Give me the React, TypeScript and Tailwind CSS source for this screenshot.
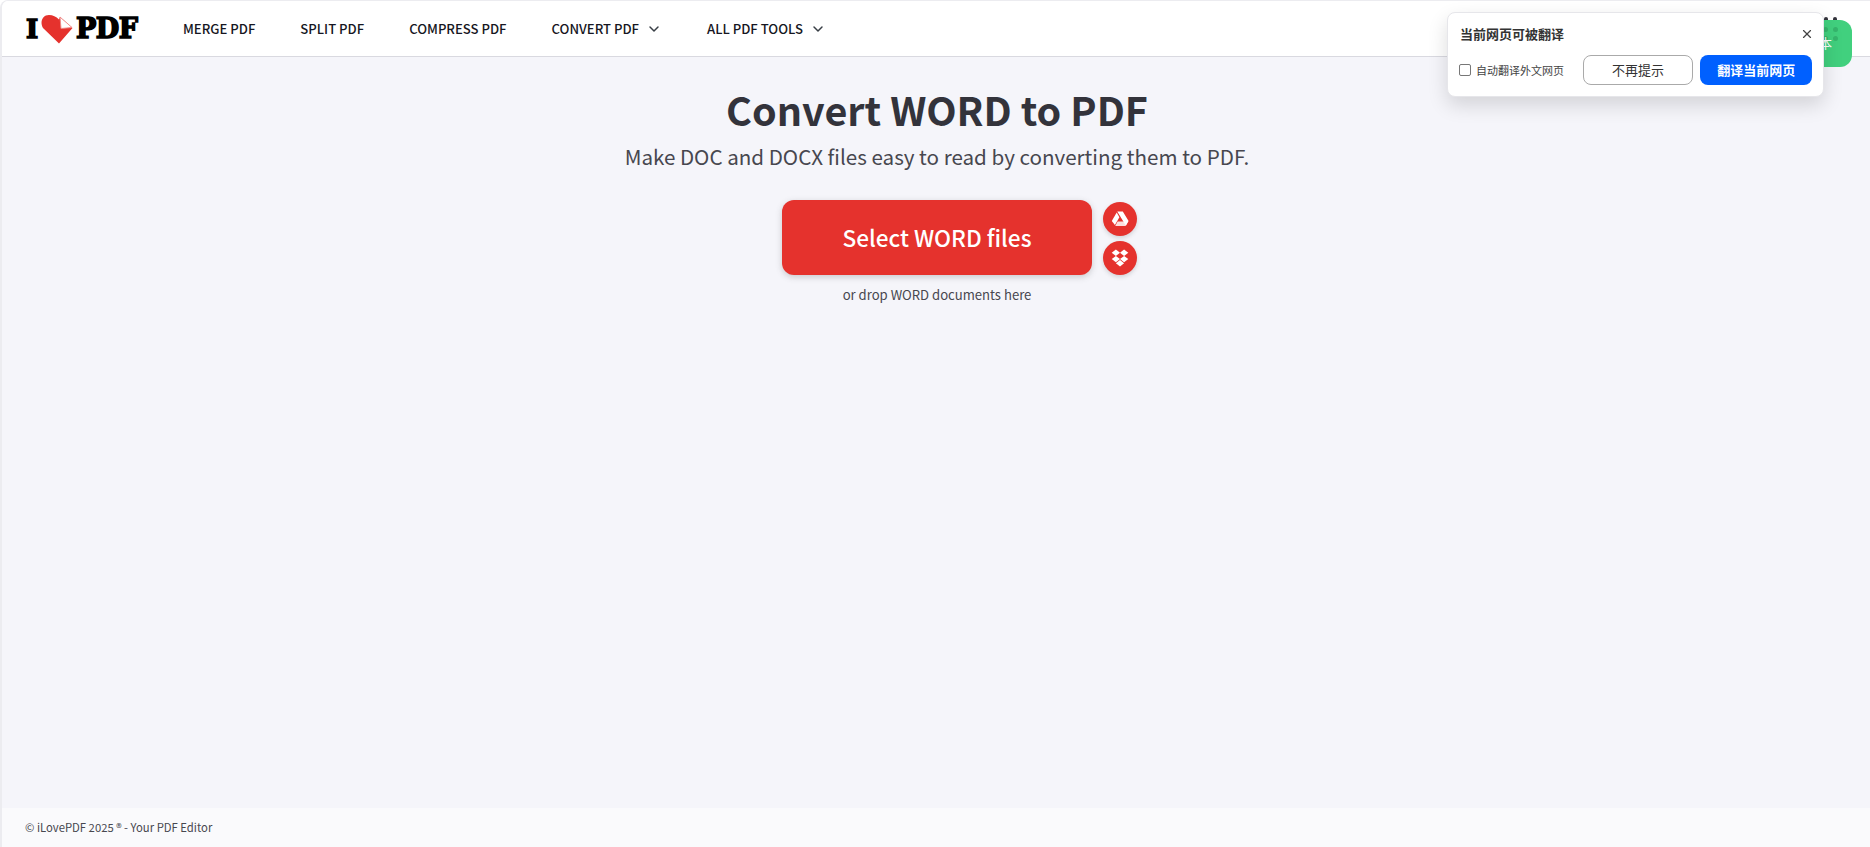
import React from 'react';
import { ChevronDown, X } from 'lucide-react';

const latin = "font-['Noto_Sans_CJK_SC','Noto_Sans',sans-serif]";

const NavItem = ({ label, caret = false }: { label: string; caret?: boolean }) => (
  <a className="flex items-center gap-[7px] text-[13.1px] font-medium leading-none text-[#161622] whitespace-nowrap">
    {label}
    {caret && <ChevronDown size={16} strokeWidth={2.2} className="text-[#383e45]" />}
  </a>
);

const Logo = () => (
  <div className="flex items-center w-[113px] h-[30px] font-['DejaVu_Serif',serif] font-bold leading-none text-black [-webkit-text-stroke:1.6px_#000]">
    <span className="w-[15px] pl-[1px] text-[26px] leading-none">I</span>
    <svg width="33" height="30" viewBox="0 0 33 30" className="mt-[1px] shrink-0">
      <path d="M19 29.5 L3 14 C-0.5 8 2.5 1 9 1 C13 1 16 2.5 19 5.5 L20 3 L32.5 14 Z" fill="#e5322d" />
      <path d="M20 3 L32 13.5 L21 14.5 Z" fill="#fff" stroke="#ee8784" strokeWidth="0.9" />
    </svg>
    <span className="ml-[3px] text-[27px] leading-none tracking-[-0.5px]">PDF</span>
  </div>
);

const ActionCircle = ({ children }: { children: React.ReactNode }) => (
  <button className="flex items-center justify-center w-[34px] h-[34px] rounded-full bg-[#e5322d] shadow-[0_2px_4px_rgba(72,72,72,0.2)]">
    {children}
  </button>
);

export default function App() {
  return (
    <div className={`relative flex flex-col h-[847px] overflow-hidden bg-white ${latin}`}>
      <div className="flex flex-col flex-1 border-l-2 border-t border-[#ececf0] rounded-tl-[8px] overflow-hidden">
        <header className="flex items-center h-[56px] shrink-0 pl-[23px] bg-white border-b border-[#d9d9e0]">
          <Logo />
          <nav className="flex items-center gap-[45px] ml-[45px]">
            <NavItem label="MERGE PDF" />
            <NavItem label="SPLIT PDF" />
            <NavItem label="COMPRESS PDF" />
            <NavItem label="CONVERT PDF" caret />
            <NavItem label="ALL PDF TOOLS" caret />
          </nav>
        </header>

        <main className="flex flex-col items-center flex-1 bg-[#f5f5fa] pt-[26px] pl-[2px]">
          <h1 className="text-[39.5px] leading-[52px] font-semibold text-[#33333b]">Convert WORD to PDF</h1>
          <p className="mt-[5px] text-[20.6px] leading-[32px] text-[#47474f]">
            Make DOC and DOCX files easy to read by converting them to PDF.
          </p>
          <div className="relative mt-[28px]">
            <button className="flex items-center justify-center w-[310px] h-[75px] rounded-[12px] bg-[#e5322d] text-white text-[22.6px] font-medium shadow-[0_2px_6px_rgba(72,72,72,0.25)]">
              Select WORD files
            </button>
            <div className="absolute left-[321px] top-[2px] flex flex-col gap-[5px]">
              <ActionCircle>
                <svg width="18" height="16" viewBox="0 0 18 16" fill="#fff">
                  <path d="M6.2 0.5 H11.8 L17.6 10 L14.9 14.8 L9 5 Z" />
                  <path d="M5.7 1.5 L8.4 6.2 L3.9 14 L0.8 10 Z" />
                  <path d="M6.6 10.6 H17 L14.4 15 H4.2 Z" opacity="0.85" />
                </svg>
              </ActionCircle>
              <ActionCircle>
                <svg width="18" height="18" viewBox="0 0 18 18" fill="#fff">
                  <path d="M4.9 0.5 L9 3.7 L4.9 6.9 L0.7 3.7 Z" />
                  <path d="M13.1 0.5 L17.3 3.7 L13.1 6.9 L9 3.7 Z" />
                  <path d="M4.9 6.9 L9 10.1 L4.9 13.3 L0.7 10.1 Z" />
                  <path d="M13.1 6.9 L17.3 10.1 L13.1 13.3 L9 10.1 Z" />
                  <path d="M4.9 14.2 L9 11 L13.1 14.2 L9 17.4 Z" />
                </svg>
              </ActionCircle>
            </div>
          </div>
          <p className="mt-[8px] text-[13.1px] leading-[24px] text-[#47474f]">or drop WORD documents here</p>
        </main>

        <footer className="flex items-center h-[39px] shrink-0 pl-[23px] bg-[#fafafc] text-[11.3px] text-[#47474f]">
          © iLovePDF 2025 ® - Your PDF Editor
        </footer>
      </div>

      {/* green widget behind the translate prompt */}
      <div className="absolute left-[1760px] top-[20px] w-[92px] h-[47px] rounded-[12px] bg-[#41d07e]">
        <div className="absolute left-[63px] top-[7px] grid grid-cols-2 gap-x-[5px] gap-y-[4px]">
          <span className="w-[5px] h-[5px] rounded-full bg-[#35b56c]" />
          <span className="w-[5px] h-[5px] rounded-full bg-[#35b56c]" />
          <span className="w-[5px] h-[5px] rounded-full bg-[#35b56c]" />
          <span className="w-[5px] h-[5px] rounded-full bg-[#35b56c]" />
        </div>
        <span className="absolute left-[59px] top-[14px] text-[13px] leading-[18px] text-white">本</span>
      </div>
      <div className="absolute left-[1824px] top-[17px] flex gap-[5px]">
        <span className="w-[4px] h-[3px] rounded-t-full bg-[#33333b]" />
        <span className="w-[4px] h-[3px] rounded-t-full bg-[#33333b]" />
      </div>

      {/* translate prompt */}
      <div className="absolute left-[1447px] top-[12px] w-[377px] h-[85px] rounded-[8px] bg-white border border-[#e6e6ea] shadow-[0_8px_20px_rgba(0,0,0,0.14)] pl-[12px] pr-[11px] pt-[12px] font-['Noto_Sans_CJK_SC',sans-serif]">
        <div className="flex items-center justify-between h-[18px]">
          <span className="text-[13px] font-bold text-[#333]">当前网页可被翻译</span>
          <X size={14} strokeWidth={2} className="mr-[-2px] text-[#444]" />
        </div>
        <div className="flex items-center mt-[12px]">
          <input type="checkbox" readOnly className="w-[12px] h-[12px] -ml-[1px] m-0 appearance-none rounded-[2px] border border-[#777] bg-white" />
          <span className="ml-[5px] text-[11px] text-[#444] w-[107px] whitespace-nowrap">自动翻译外文网页</span>
          <button className="w-[111px] h-[30px] rounded-[8px] border border-[#aaa] bg-white text-[13px] text-[#333]">不再提示</button>
          <button className="ml-[7px] w-[112px] h-[30px] rounded-[8px] bg-[#0060ff] text-[13px] font-bold text-white">翻译当前网页</button>
        </div>
      </div>
    </div>
  );
}
